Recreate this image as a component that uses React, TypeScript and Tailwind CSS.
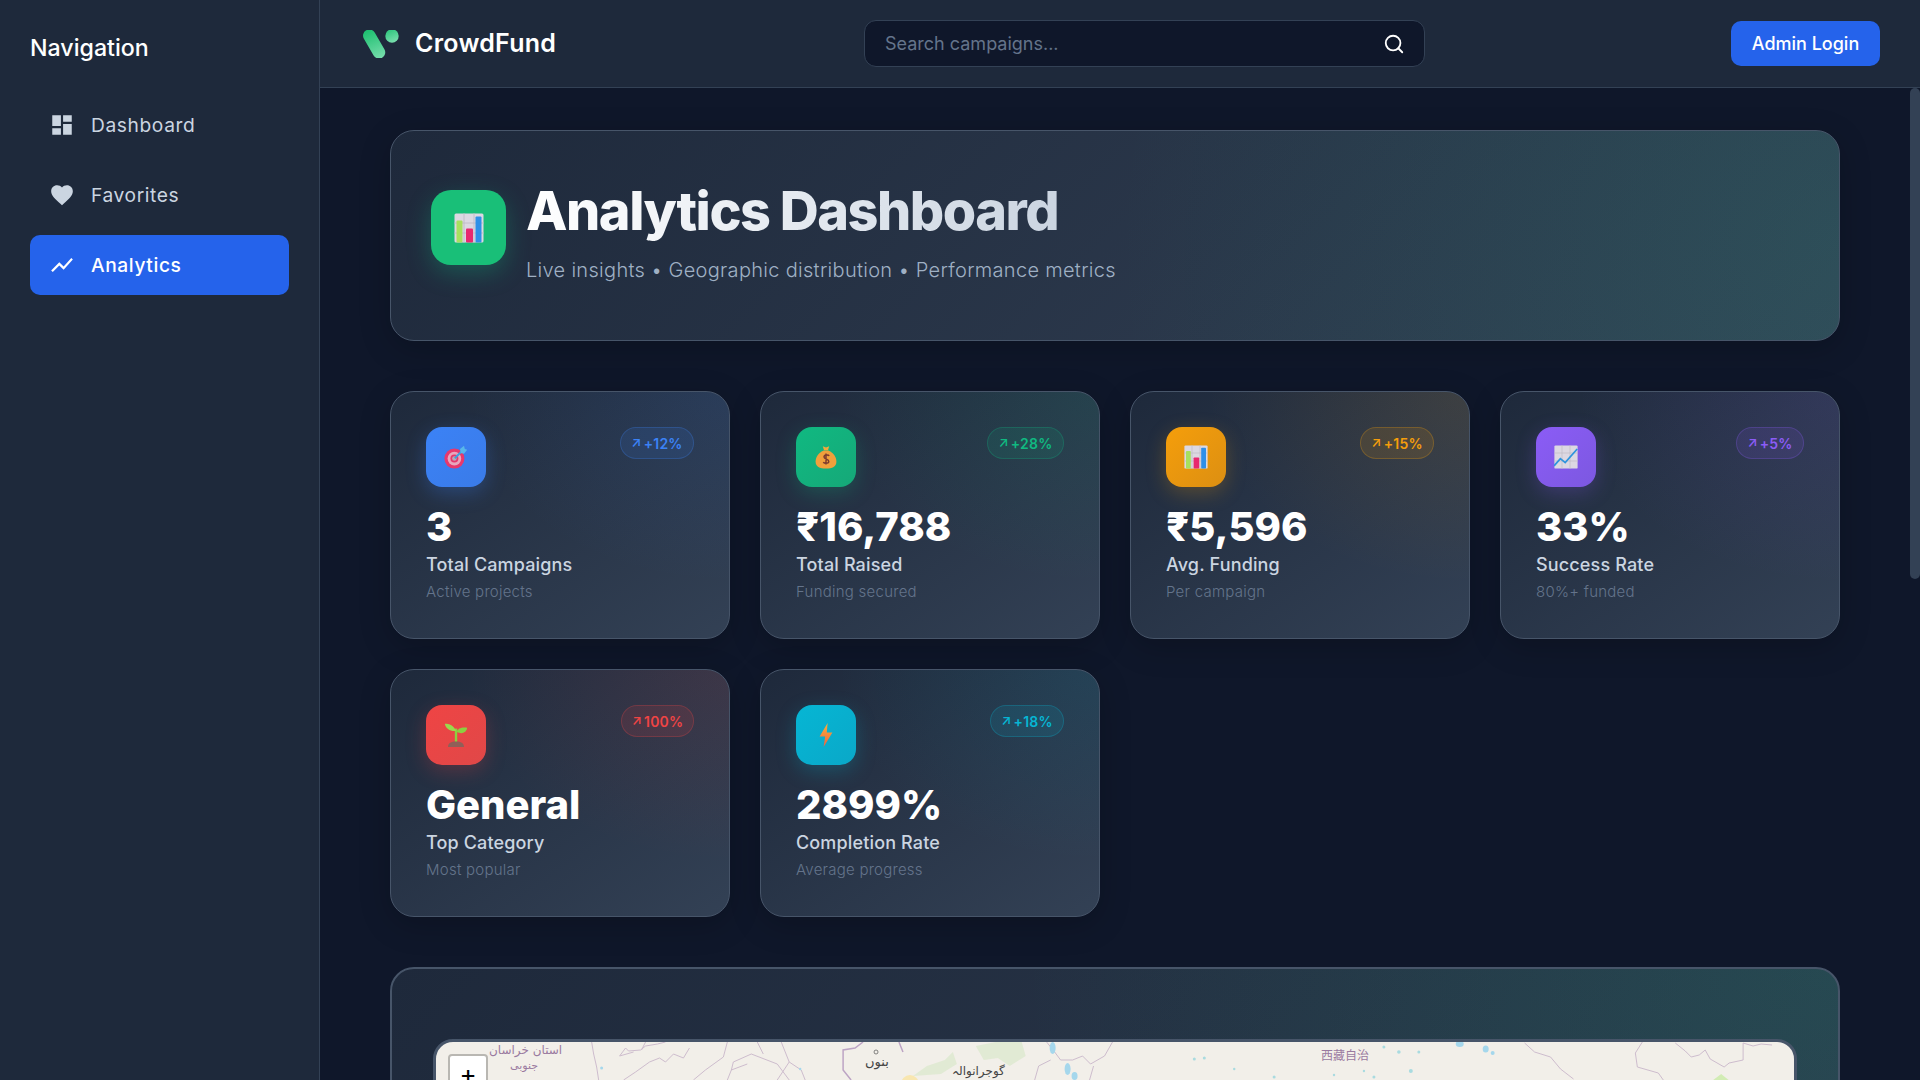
import { Search } from "lucide-react";
import { MdDashboard, MdFavorite, MdShowChart } from "react-icons/md";

function ChartEmoji({ className }: { className: string }) {
  return (
    <svg viewBox="0 0 30 30" className={className}>
      <rect x="0.5" y="0.5" width="29" height="29" rx="1.5" fill="#dcd8e2" />
      <path d="M0 10h30M0 20h30M10 0v30M20 0v30" stroke="#bdb9c4" strokeWidth="0.8" />
      <rect x="2.5" y="7.5" width="6" height="22" rx="1" fill="#a7e05f" />
      <rect x="12" y="15.5" width="7" height="14" rx="1" fill="#e8286f" />
      <rect x="21.5" y="3.5" width="6" height="26" rx="1" fill="#2f8fe8" />
    </svg>
  );
}

function LineEmoji({ className }: { className: string }) {
  return (
    <svg viewBox="0 0 30 30" className={className}>
      <rect x="0.5" y="0.5" width="29" height="29" rx="1.5" fill="#dcd8e2" />
      <path d="M0 10h30M0 20h30M10 0v30M20 0v30" stroke="#bdb9c4" strokeWidth="0.8" />
      <path d="M0 26l8-9 6 5L29 5" fill="none" stroke="#2f94de" strokeWidth="2.2" />
    </svg>
  );
}

function TargetEmoji({ className }: { className: string }) {
  return (
    <svg viewBox="0 0 30 30" className={className}>
      <circle cx="13" cy="17" r="12.5" fill="#e8386c" />
      <circle cx="13" cy="17" r="8.5" fill="#eaa6bc" />
      <circle cx="13" cy="17" r="5" fill="#e8386c" />
      <circle cx="13" cy="17" r="2.8" fill="#b9a9b4" />
      <path d="M13.500 16.500L24 6" stroke="#3d9fe0" strokeWidth="2.4" />
      <path d="M20 5l5-4 1 4 3 1-4 5-4-1z" fill="#58b7ea" />
    </svg>
  );
}

function BagEmoji({ className }: { className: string }) {
  return (
    <svg viewBox="0 0 30 30" className={className}>
      <path d="M11 1.5l4 1.5 4-1.5-1.5 5h-5z" fill="#f2a93b" />
      <path d="M12 7h6c7 3 10 9 10 14 0 6-5 8.5-13 8.5S2 27 2 21C2 16 5 10 12 7z" fill="#f0a03c" />
      <path d="M19 13.5c-1-1.5-6.5-1.5-6.5 1.5s6 2.500 6 5.500-5.500 2.500-7 1M15 10.500v14" fill="none" stroke="#7c3a2e" strokeWidth="1.8" />
    </svg>
  );
}

function SproutEmoji({ className }: { className: string }) {
  return (
    <svg viewBox="0 0 30 30" className={className}>
      <path d="M15 25V7" stroke="#8bd13f" strokeWidth="3" />
      <path d="M15 10C12 3 7 1 1 1c1 6 7 10 14 9z" fill="#9ad94c" />
      <path d="M16 11c1-4 6-6 13-5-1 6-7 9-13 5z" fill="#8ccf40" />
      <path d="M5 30c0-5 4-7 10-7s10 2 10 7z" fill="#8f5f58" />
    </svg>
  );
}

function BoltEmoji({ className }: { className: string }) {
  return (
    <svg viewBox="0 0 30 30" className={className}>
      <defs>
        <linearGradient id="bolt" x1="0" y1="0" x2="0" y2="1">
          <stop offset="0" stopColor="#f6b23a" />
          <stop offset="1" stopColor="#f2613f" />
        </linearGradient>
      </defs>
      <path d="M17 0L7 17h7l-2 13 11-18h-7z" fill="url(#bolt)" />
    </svg>
  );
}

const stats = [
  {
    value: "3",
    label: "Total Campaigns",
    sub: "Active projects",
    trend: "+12%",
    Icon: TargetEmoji,
    card: "bg-[radial-gradient(ellipse_at_100%_0%,rgba(59,130,246,0.1),transparent_55%),linear-gradient(145deg,#1e293b,#334155)]",
    iconBox: "bg-[linear-gradient(135deg,#3b82f6,#3a7be8)] shadow-[0_6px_20px_rgba(59,130,246,0.3)]",
    badge: "text-[#3b82f6] bg-[rgba(59,130,246,0.12)] border-[rgba(59,130,246,0.25)] w-[74px]",
  },
  {
    value: "₹16,788",
    label: "Total Raised",
    sub: "Funding secured",
    trend: "+28%",
    Icon: BagEmoji,
    card: "bg-[radial-gradient(ellipse_at_100%_0%,rgba(16,185,129,0.1),transparent_55%),linear-gradient(145deg,#1e293b,#334155)]",
    iconBox: "bg-[linear-gradient(135deg,#10b981,#16a878)] shadow-[0_6px_20px_rgba(16,185,129,0.25)]",
    badge: "text-[#10b981] bg-[rgba(16,185,129,0.12)] border-[rgba(16,185,129,0.25)] w-[77px]",
  },
  {
    value: "₹5,596",
    label: "Avg. Funding",
    sub: "Per campaign",
    trend: "+15%",
    Icon: ChartEmoji,
    card: "bg-[radial-gradient(ellipse_at_100%_0%,rgba(245,158,11,0.1),transparent_55%),linear-gradient(145deg,#1e293b,#334155)]",
    iconBox: "bg-[linear-gradient(135deg,#f59e0b,#dc8f12)] shadow-[0_6px_20px_rgba(245,158,11,0.25)]",
    badge: "text-[#f59e0b] bg-[rgba(245,158,11,0.12)] border-[rgba(245,158,11,0.25)] w-[74px]",
  },
  {
    value: "33%",
    label: "Success Rate",
    sub: "80%+ funded",
    trend: "+5%",
    Icon: LineEmoji,
    card: "bg-[radial-gradient(ellipse_at_100%_0%,rgba(139,92,246,0.1),transparent_55%),linear-gradient(145deg,#1e293b,#334155)]",
    iconBox: "bg-[linear-gradient(135deg,#8b5cf6,#7c58e0)] shadow-[0_6px_20px_rgba(139,92,246,0.25)]",
    badge: "text-[#8b5cf6] bg-[rgba(139,92,246,0.12)] border-[rgba(139,92,246,0.25)] w-[68px]",
  },
  {
    value: "General",
    label: "Top Category",
    sub: "Most popular",
    trend: "100%",
    Icon: SproutEmoji,
    card: "bg-[radial-gradient(ellipse_at_100%_0%,rgba(239,68,68,0.1),transparent_55%),linear-gradient(145deg,#1e293b,#334155)]",
    iconBox: "bg-[linear-gradient(135deg,#ef4444,#e04848)] shadow-[0_6px_20px_rgba(239,68,68,0.25)]",
    badge: "text-[#ef4444] bg-[rgba(239,68,68,0.12)] border-[rgba(239,68,68,0.25)] w-[73px]",
  },
  {
    value: "2899%",
    label: "Completion Rate",
    sub: "Average progress",
    trend: "+18%",
    Icon: BoltEmoji,
    card: "bg-[radial-gradient(ellipse_at_100%_0%,rgba(6,182,212,0.1),transparent_55%),linear-gradient(145deg,#1e293b,#334155)]",
    iconBox: "bg-[linear-gradient(135deg,#06b6d4,#0aa8c8)] shadow-[0_6px_20px_rgba(6,182,212,0.25)]",
    badge: "text-[#06b6d4] bg-[rgba(6,182,212,0.12)] border-[rgba(6,182,212,0.25)] w-[74px]",
  },
];

function StatCard({ stat }: { stat: (typeof stats)[number] }) {
  const { Icon } = stat;
  return (
    <div className={`rounded-[24px] border border-[#475569] p-[35px] h-[248px] shadow-[0_8px_32px_rgba(0,0,0,0.2)] ${stat.card}`}>
      <div className="flex items-start justify-between mb-[16px]">
        <div className={`w-[60px] h-[60px] rounded-[16px] flex items-center justify-center ${stat.iconBox}`}>
          <Icon className="w-[24px] h-[24px]" />
        </div>
        <div className={`h-[32px] rounded-[16px] border flex items-center justify-center gap-[2px] text-[14px] font-semibold tracking-[0.2px] ${stat.badge}`}>
          <span className="text-[13px]">↗</span>
          <span>{stat.trend}</span>
        </div>
      </div>
      <div className="text-[40px] leading-[48px] font-extrabold text-white">{stat.value}</div>
      <div className="text-[18px] leading-[27px] font-medium tracking-[0.15px] text-[#cbd5e1] mb-[3px]">{stat.label}</div>
      <div className="text-[15px] leading-[21px] font-light tracking-[0.25px] text-[#64748b]">{stat.sub}</div>
    </div>
  );
}

function MapPreview() {
  return (
    <div className="relative h-[700px] rounded-[20px] border-[3px] border-[#475569] bg-[#f2efe9] overflow-hidden">
      <svg className="absolute inset-0 w-full h-[40px]" viewBox="0 0 1361 40" preserveAspectRatio="none">
        <path d="M478 34l14-10 18-6 8-8 4 12-16 10zM541 4l20-4 26 0 4 14-16 10-12-8-14 2z" fill="#dbe8cc" opacity="0.75" />
        <path d="M1280 38l8-6 10 8z" fill="#d2ecb4" />
        <circle cx="475" cy="42" r="9" fill="#f8e6b0" />
        <g fill="none" stroke="#cdbccd" strokeWidth="1">
          <path d="M156 0l2 12 3 13 2 13" />
          <path d="M184 14l6-8 3 3 12-1 5-4 12-2 8-2M184 14l14-4M206 8l4-8" />
          <path d="M188 38l12-8 14-10 10-4 6 4 8-8 10 4 6-10" />
          <path d="M258 38l12-10 18-13 4-15M292 38l4-10 2-8 18-8 26 10 12 16M322 0l6 12M296 28l16-6" />
          <path d="M342 38l12-18-8-20M354 20l12 8 4 10" />
          <path d="M612 0l8 10 6 8 12 0 10-4 8 8 14-8 8-14" />
          <path d="M600 38l4-14 12-6M655 38l4-14" />
          <path d="M1091 1l10 9 16 5 10 12 13 10M1209 0l-7 11 2 14 21 6 5 7" />
          <path d="M1242 1l10 8 6 6 8-2 6-5 5 9 14 8 5-4 14-3V1l10 3 8-2 11 1" />
        </g>
        <path d="M428 0l-8 6-12 2v20l8 10M464 0l4 10" fill="none" stroke="#bda4c4" strokeWidth="1.5" />
        <g fill="#a5d7ec">
          <ellipse cx="1026" cy="2" rx="4" ry="3" />
          <ellipse cx="1052" cy="7" rx="3" ry="3.500" />
          <ellipse cx="1059" cy="11" rx="2" ry="2" />
          <ellipse cx="618" cy="6" rx="3" ry="6" />
          <ellipse cx="633" cy="27" rx="3" ry="6" />
          <ellipse cx="640" cy="34" rx="3" ry="4" />
          <circle cx="166" cy="26" r="1.5" />
          <circle cx="365" cy="27" r="1.200" />
        </g>
        <g fill="#a9dbe0">
          <circle cx="760" cy="17" r="1.500" />
          <circle cx="770" cy="16" r="1.500" />
          <circle cx="800" cy="27" r="1.200" />
          <circle cx="840" cy="35" r="1.500" />
          <circle cx="950" cy="5" r="1.500" />
          <circle cx="965" cy="10" r="1.800" />
          <circle cx="985" cy="10" r="1.500" />
          <circle cx="977" cy="29" r="2" />
          <circle cx="940" cy="35" r="1.500" />
          <circle cx="930" cy="29" r="1.200" />
          <circle cx="900" cy="33" r="1.200" />
        </g>
        <circle cx="441" cy="10" r="2" fill="none" stroke="#666" strokeWidth="0.8" />
      </svg>

      <span className="absolute left-[53px] top-[-1px] text-[12px] leading-[18px] text-[#9a7aa0] font-['DejaVu_Sans',sans-serif]">استان خراسان</span>
      <span className="absolute left-[74px] top-[15px] text-[11px] leading-[18px] text-[#9a7aa0] font-['DejaVu_Sans',sans-serif]">جنوبی</span>
      <span className="absolute left-[429px] top-[11px] text-[13px] leading-[18px] text-[#444] font-['DejaVu_Sans',sans-serif]">بنوں</span>
      <span className="absolute left-[516px] top-[20px] text-[12px] leading-[18px] text-[#444] font-['DejaVu_Sans',sans-serif]">گوجرانوالہ</span>
      <span className="absolute left-[885px] top-[4px] text-[12px] leading-[18px] text-[#9a7aa0] font-['Noto_Sans_CJK_SC',sans-serif]">西藏自治</span>

      <div className="absolute left-[12px] top-[12px] w-[40px] h-[40px] rounded-[4px] bg-white border-2 border-[#b9b7b2] flex items-center justify-center text-[26px] leading-none text-black">
        +
      </div>
    </div>
  );
}

export default function App() {
  const navItems = [
    { name: "Dashboard", Icon: MdDashboard },
    { name: "Favorites", Icon: MdFavorite },
    { name: "Analytics", Icon: MdShowChart, active: true },
  ];

  return (
    <div className="flex h-screen overflow-hidden bg-[#0f172a] font-[Inter,sans-serif]">
      <aside className="w-[320px] flex-shrink-0 bg-[#1e293b] border-r border-[#334155] px-[30px] pt-[30px]">
        <h2 className="text-[23.2px] leading-[36px] font-medium text-white mb-[29px]">Navigation</h2>
        <nav className="flex flex-col gap-[10px] w-[259px]">
          {navItems.map(({ name, Icon, active }) => (
            <div
              key={name}
              className={`h-[60px] rounded-[10px] pl-[19px] pr-[20px] flex items-center gap-[16px] text-[19.2px] tracking-[0.6px] ${
                active ? "bg-[#2563eb] text-white font-medium tracking-[0.5px]" : "text-[#cbd5e1]"
              }`}
            >
              <Icon size={26} />
              {name}
            </div>
          ))}
        </nav>
      </aside>

      <div className="flex-1 min-w-0 flex flex-col">
        <header className="h-[88px] flex-shrink-0 bg-[#1e293b] border-b border-[#334155] flex items-center pl-[43px] pr-[40px]">
          <div className="flex items-center gap-[15px] w-[501px]">
            <svg viewBox="0 0 37 28" className="w-[37px] h-[28px]">
              <defs>
                <linearGradient id="logo" gradientUnits="userSpaceOnUse" x1="4" y1="0" x2="16" y2="28">
                  <stop offset="0" stopColor="#1cbf6f" />
                  <stop offset="1" stopColor="#74dcaa" />
                </linearGradient>
                <linearGradient id="logoDot" x1="0" y1="0" x2="0.4" y2="1">
                  <stop offset="0" stopColor="#26c277" />
                  <stop offset="1" stopColor="#74dcaa" />
                </linearGradient>
              </defs>
              <path d="M6.300 5.700L16 22.300" stroke="url(#logo)" strokeWidth="12.500" strokeLinecap="round" fill="none" />
              <circle cx="29" cy="6" r="6.700" fill="url(#logoDot)" />
            </svg>
            <span className="text-[25px] font-semibold tracking-[0.25px] text-white">CrowdFund</span>
          </div>

          <div className="w-[561px] h-[47px] rounded-[12px] bg-[#0f172a] border border-[#334155] flex items-center justify-between pl-[20px] pr-[19px]">
            <span className="text-[18px] text-[#64748b]">Search campaigns...</span>
            <Search size={22} className="text-white" />
          </div>

          <button className="ml-auto w-[149px] h-[45px] rounded-[10px] bg-[#2563eb] text-white text-[18px] font-medium">
            Admin Login
          </button>
        </header>

        <div className="relative flex-1 min-h-0">
          <main className="h-full overflow-hidden pl-[70px] pr-[80px] pt-[42px]">
            <section className="rounded-[24px] border border-[#475569] pl-[40px] pt-[46px] h-[211px] mb-[50px] bg-[radial-gradient(circle_at_100%_55%,rgba(16,185,129,0.12),transparent_50%),linear-gradient(135deg,#1e293b,#334155)] shadow-[0_8px_32px_rgba(0,0,0,0.2)]">
              <div className="flex items-start gap-[20px]">
                <div className="mt-[13px] w-[75px] h-[75px] rounded-[20px] bg-[#19bf78] shadow-[0_8px_25px_rgba(16,185,129,0.3)] flex items-center justify-center">
                  <ChartEmoji className="w-[30px] h-[30px]" />
                </div>
                <div>
                  <h1 className="text-[54px] leading-[67px] font-extrabold tracking-[-1.5px] mb-[11px] w-fit bg-gradient-to-r from-white to-[#cbd5e1] bg-clip-text text-transparent">
                    Analytics Dashboard
                  </h1>
                  <p className="text-[20px] leading-[30px] font-light tracking-[0.3px] text-[#9fb0c4]">
                    Live insights • Geographic distribution • Performance metrics
                  </p>
                </div>
              </div>
            </section>

            <div className="grid grid-cols-4 gap-[30px] mb-[50px]">
              {stats.map((stat) => (
                <StatCard key={stat.label} stat={stat} />
              ))}
            </div>

            <section className="h-[1090px] rounded-[24px] border-2 border-[#475569] px-[41px] pt-[70px] bg-[radial-gradient(ellipse_at_100%_0%,rgba(16,185,129,0.14),transparent_40%),linear-gradient(135deg,#1e293b,#334155)]">
              <MapPreview />
            </section>
          </main>
          {/* scrollbar thumb, headless chrome hides the real one */}
          <div className="absolute right-0 top-0 w-[10px] h-[491px] rounded-[5px] bg-[#334155]" />
        </div>
      </div>
    </div>
  );
}
